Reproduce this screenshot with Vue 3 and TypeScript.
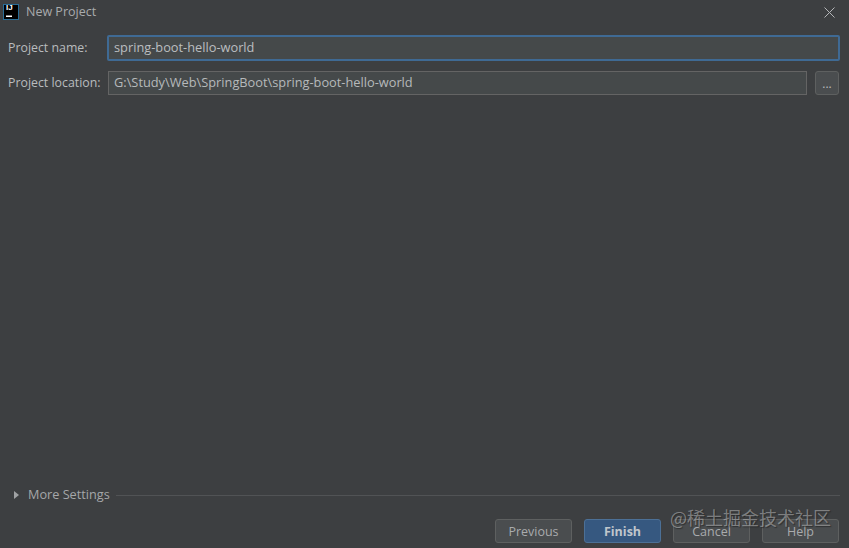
<script setup lang="ts">
const projectName: string = 'spring-boot-hello-world'
const projectLocation: string = 'G:\\Study\\Web\\SpringBoot\\spring-boot-hello-world'
</script>

<template>
  <div class="dialog">
    <header class="titlebar">
      <svg class="logo" width="16" height="16" viewBox="0 0 16 16">
        <rect x="0.5" y="0.5" width="15" height="15" fill="#000" stroke="#2a6d96" />
        <rect x="3" y="11.5" width="6" height="1.5" fill="#fff" />
      </svg>
      <span class="logo-text">IJ</span>
      <span class="title">New Project</span>
      <svg class="close" width="11" height="11" viewBox="0 0 11 11">
        <path d="M0.5 0.5L10.5 10.5M10.5 0.5L0.5 10.5" stroke="#b4b6b8" stroke-width="1" fill="none" />
      </svg>
    </header>

    <div class="form">
      <div class="row name-row">
        <label class="label">Project name:</label>
        <div class="input focused">{{ projectName }}</div>
      </div>
      <div class="row location-row">
        <label class="label">Project location:</label>
        <div class="input">{{ projectLocation }}</div>
        <button class="browse">...</button>
      </div>
    </div>

    <div class="spacer"></div>

    <div class="more">
      <span class="arrow"></span>
      <span class="more-text">More Settings</span>
      <span class="rule"></span>
    </div>

    <footer class="actions">
      <button class="btn">Previous</button>
      <button class="btn primary">Finish</button>
      <button class="btn">Cancel</button>
      <button class="btn">Help</button>
    </footer>

    <div class="watermark">@稀土掘金技术社区</div>
  </div>
</template>

<style>
html, body { margin: 0; background: #3c3f41; }
</style>

<style scoped>
.dialog {
  position: relative;
  width: 849px;
  height: 548px;
  box-sizing: border-box;
  display: flex;
  flex-direction: column;
  overflow: hidden;
  background: #3d3f41;
  color: #b9bcbe;
  font-family: "Open Sans", "Noto Sans", sans-serif;
  font-size: 12.5px;
}
.titlebar {
  position: relative;
  height: 24px;
  flex: none;
  display: flex;
  align-items: center;
  padding: 0 14px 0 3px;
}
.logo { flex: none; margin-top: -1px; }
.logo-text {
  position: absolute;
  left: 6px;
  top: 4px;
  font: 700 8px/8px "Liberation Sans", sans-serif;
  color: #fff;
}
.title { margin: -2px 0 0 7px; flex: 1; color: #a9abad; }
.close { flex: none; }
.form {
  display: flex;
  flex-direction: column;
  gap: 10px;
  padding: 11px 10px 0 8px;
}
.row { display: flex; align-items: center; }
.label { width: 100px; flex: none; white-space: nowrap; font-size: 12.35px; margin-top: -2px; }
.input {
  flex: 1;
  box-sizing: border-box;
  height: 24px;
  line-height: 20px;
  padding-left: 5px;
  background: #45494a;
  border: 1px solid #646464;
  color: #b6b9bb;
  font-size: 12.8px;
}
.name-row .input {
  color: #bbbec0;
  height: 26px;
  line-height: 21px;
  padding-left: 5px;
  margin: 0 -1px;
  border: 2px solid #3f6a94;
  border-radius: 2px;
}
.browse {
  flex: none;
  width: 24px;
  height: 24px;
  margin-left: 8px;
  padding: 0;
  background: #4a4d4f;
  border: 1px solid #5e6060;
  border-radius: 3px;
  color: #b9bcbe;
  font: 12px/24px "Open Sans", sans-serif;
}
.spacer { flex: 1; }
.more {
  display: flex;
  align-items: center;
  gap: 6px;
  height: 20px;
  margin-bottom: 14px;
  padding: 0 9px 0 14px;
}
.arrow {
  width: 0;
  height: 0;
  border-left: 5px solid #a0a2a4;
  border-top: 4px solid transparent;
  border-bottom: 4px solid transparent;
  margin-right: 4px;
  margin-top: -1px;
}
.more-text { color: #a5a7a9; font-size: 12.7px; margin: -2px 0 0 -1px; }
.rule { flex: 1; height: 1px; background: #515355; }
.actions {
  display: flex;
  justify-content: flex-end;
  gap: 12px;
  padding: 0 10px 5px 0;
}
.btn {
  width: 77px;
  height: 24px;
  box-sizing: border-box;
  padding: 1px 0 0;
  background: #4a4d4f;
  border: 1px solid #5e6060;
  border-radius: 3px;
  color: #a9abad;
  font: 12.5px/22px "Open Sans", sans-serif;
}
.btn.primary {
  background: #365880;
  border-color: #4c7096;
  color: #c0c6cc;
  font-weight: 700;
}
.watermark {
  position: absolute;
  left: 670px;
  top: 505px;
  font: 18px/24px "Noto Sans CJK SC", sans-serif;
  color: rgba(215, 215, 215, 0.45);
  text-shadow: 1px 1px 1px rgba(30, 30, 30, 0.6);
  white-space: nowrap;
}
</style>
